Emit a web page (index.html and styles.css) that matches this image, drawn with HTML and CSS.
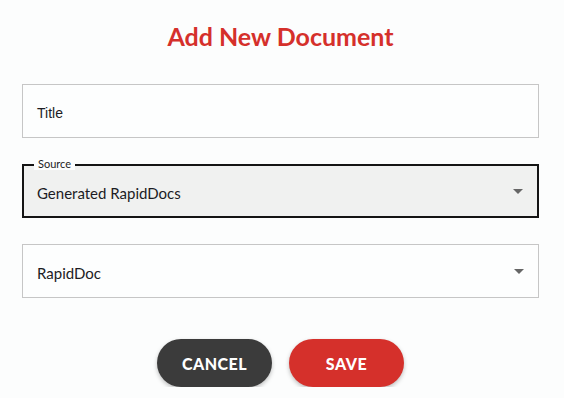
FILE: index.html
```html
<!DOCTYPE html>
<html>
<head>
<meta charset="utf-8">
<link rel="stylesheet" href="styles.css">
</head>
<body>
<div class="page">
  <h1 class="heading">Add New Document</h1>
  <div class="fields">
    <div class="field plain">
      <span class="text arial">Title</span>
    </div>
    <div class="field focused">
      <span class="legend">Source</span>
      <span class="text">Generated RapidDocs</span>
      <span class="arrow"></span>
    </div>
    <div class="field plain">
      <span class="text">RapidDoc</span>
      <span class="arrow"></span>
    </div>
  </div>
  <div class="actions">
    <button class="btn cancel">CANCEL</button>
    <button class="btn save">SAVE</button>
  </div>
</div>
</body>
</html>
```

FILE: styles.css
```css
html, body {
  margin: 0;
  padding: 0;
  background: #fcfdfd;
}
.page {
  padding: 22px 25px 0 22px;
  font-family: Lato, "Open Sans", sans-serif;
}
.heading {
  margin: 0 0 34px 0;
  font-size: 25px;
  line-height: 28px;
  font-weight: 700;
  color: #d5302b;
  text-align: center;
}
.fields {
  display: flex;
  flex-direction: column;
  gap: 26px;
}
.field {
  position: relative;
  height: 54px;
  box-sizing: border-box;
  display: flex;
  align-items: center;
  padding: 3px 15px 0 14px;
  background: #fdfefe;
  border: 1px solid #c6c6c6;
}
.field.focused {
  border: 2px solid #141414;
  background: #f0f1f0;
  padding-left: 13px;
}
.text {
  font-size: 15px;
  color: #1c1c24;
}
.text.arial {
  font-family: "Liberation Sans", Arial, sans-serif;
  font-size: 14px;
}
.legend {
  position: absolute;
  left: 10px;
  top: -8px;
  padding: 0 4px;
  background: #fcfdfd;
  font-size: 11px;
  line-height: 12px;
  color: #1c1c24;
}
.arrow {
  position: absolute;
  right: 14px;
  top: 50%;
  margin-top: -2px;
  width: 0;
  height: 0;
  border-left: 5px solid transparent;
  border-right: 5px solid transparent;
  border-top: 5px solid #666;
}
.actions {
  display: flex;
  justify-content: center;
  gap: 17px;
  margin-top: 41px;
}
.btn {
  width: 115px;
  height: 48px;
  border: none;
  border-radius: 24px;
  font-family: Lato, sans-serif;
  font-weight: 900;
  font-size: 16px;
  letter-spacing: 0.5px;
  color: #fff;
  box-shadow: 0 2px 4px rgba(0,0,0,0.25);
}
.cancel { background: #3b3b3b; }
.save { background: #d5302b; }
```
